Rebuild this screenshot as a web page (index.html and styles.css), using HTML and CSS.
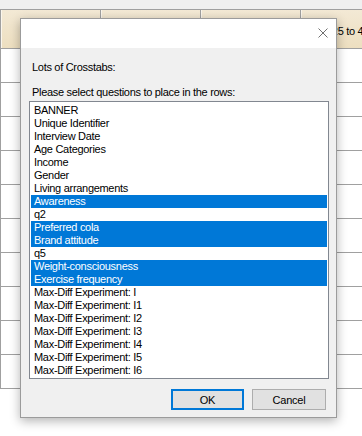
FILE: index.html
```html
<html><head><meta charset="UTF-8"><title>Lots of Crosstabs</title>
<link rel="stylesheet" href="styles.css">
</head>
<body>
<div class="topbar"></div>
<div class="sheet">
    <div class="sheet-head">
        <div class="hcell"></div>
        <div class="hcell"></div>
        <div class="hcell"></div>
        <div class="hcell">25 to 44</div>
    </div>
    <div class="srow"></div>
    <div class="srow"></div>
    <div class="srow"></div>
    <div class="srow"></div>
    <div class="srow"></div>
    <div class="srow"></div>
    <div class="srow"></div>
    <div class="srow"></div>
    <div class="srow"></div>
    <div class="srow"></div>
</div>

<div class="dialog">
    <div class="titlebar">
        <svg class="close" width="10" height="10" viewBox="0 0 10 10">
            <path d="M0.5 0.5 L9.5 9.5 M9.5 0.5 L0.5 9.5" stroke="#707070" stroke-width="1" fill="none"/>
        </svg>
    </div>
    <div class="dialog-body">
        <div class="label">Lots of Crosstabs:</div>
        <div class="label second">Please select questions to place in the rows:</div>
        <div class="listbox">
            <div class="item">BANNER</div>
            <div class="item">Unique Identifier</div>
            <div class="item">Interview Date</div>
            <div class="item">Age Categories</div>
            <div class="item">Income</div>
            <div class="item">Gender</div>
            <div class="item">Living arrangements</div>
            <div class="item selected">Awareness</div>
            <div class="item">q2</div>
            <div class="item selected">Preferred cola</div>
            <div class="item selected">Brand attitude</div>
            <div class="item">q5</div>
            <div class="item selected">Weight-consciousness</div>
            <div class="item selected">Exercise frequency</div>
            <div class="item">Max-Diff Experiment: I</div>
            <div class="item">Max-Diff Experiment: I1</div>
            <div class="item">Max-Diff Experiment: I2</div>
            <div class="item">Max-Diff Experiment: I3</div>
            <div class="item">Max-Diff Experiment: I4</div>
            <div class="item">Max-Diff Experiment: I5</div>
            <div class="item">Max-Diff Experiment: I6</div>
        </div>
        <div class="actions">
            <button class="btn default">OK</button>
            <button class="btn">Cancel</button>
        </div>
    </div>
</div>
</body></html>
```

FILE: styles.css
```css
body {
    margin: 0;
    width: 362px;
    height: 436px;
    overflow: hidden;
    position: relative;
    background-color: #ffffff;
    font-family: 'Liberation Sans', Arial, sans-serif;
    font-size: 11px;
    letter-spacing: -0.3px;
    color: #000000;
}

.topbar {
    height: 9px;
    background-color: #f0f0f0;
}

.sheet {
    width: 500px;
    border-top: 1px solid #a0a0a0;
    border-left: 1px solid #a0a0a0;
}

.sheet-head {
    display: flex;
    height: 39px;
    border-bottom: 1px solid #a0a0a0;
    box-sizing: border-box;
    background: linear-gradient(#f3e9d5, #eddfc0);
}

.hcell {
    width: 100px;
    flex-shrink: 0;
    box-sizing: border-box;
    border-right: 1px solid #a0a0a0;
    box-shadow: inset 1px 0 #fbf6ec;
    display: flex;
    align-items: center;
    justify-content: center;
    padding-top: 3px;
    font-size: 11px;
}

.srow {
    height: 34px;
    box-sizing: border-box;
    border-bottom: 1px solid #a0a0a0;
}

.dialog {
    position: absolute;
    left: 20px;
    top: 18px;
    width: 317px;
    height: 400px;
    box-sizing: border-box;
    border: 1px solid #9b9b9b;
    background-color: #f0f0f0;
    box-shadow: 0 3px 10px rgba(0, 0, 0, 0.3);
}

.titlebar {
    height: 29px;
    background-color: #ffffff;
    display: flex;
    justify-content: flex-end;
    align-items: flex-start;
}

.close {
    margin-top: 9px;
    margin-right: 8px;
}

.dialog-body {
    padding: 13px 7px 0 8px;
}

.label {
    line-height: 13px;
    padding-left: 3px;
}

.label.second {
    margin-top: 12px;
}

.listbox {
    margin-top: 2px;
    width: 300px;
    box-sizing: border-box;
    border: 1px solid #828790;
    background-color: #ffffff;
    padding: 2px 1px 1px 1px;
}

.item {
    line-height: 13px;
    height: 13px;
    padding-left: 3px;
    white-space: nowrap;
}

.item.selected {
    background-color: #0078d7;
    color: #ffffff;
}

.actions {
    margin-top: 10px;
    display: flex;
    justify-content: flex-end;
    gap: 8px;
    padding-right: 3px;
}

.btn {
    height: 21px;
    width: 74px;
    box-sizing: border-box;
    padding: 0;
    border: 1px solid #adadad;
    background-color: #e1e1e1;
    font-family: 'Liberation Sans', Arial, sans-serif;
    font-size: 11px;
    letter-spacing: -0.2px;
    color: #000000;
}

.btn.default {
    width: 73px;
    border: 2px solid #0078d7;
}
```
